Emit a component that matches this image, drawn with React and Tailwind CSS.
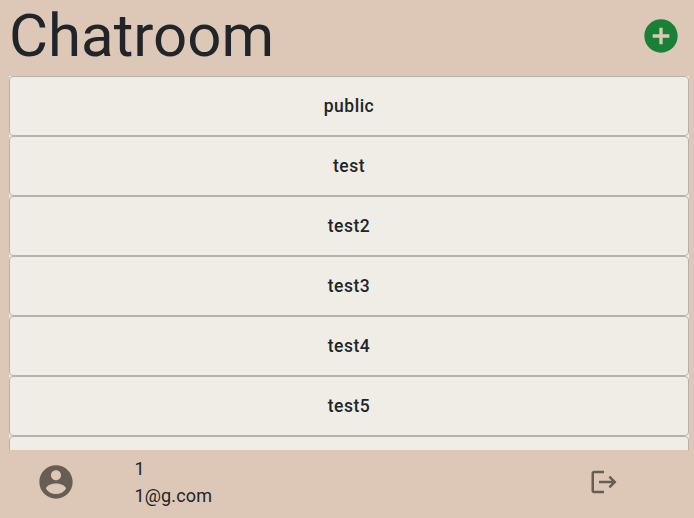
const rooms = ["public", "test", "test2", "test3", "test4", "test5"];

export default function App() {
  return (
    <div className="flex h-[518px] w-full flex-col overflow-hidden bg-[#ddc8b8] font-[Roboto,sans-serif] text-[#212529]">
      <header className="flex h-[76px] shrink-0 items-start justify-between pl-[9px] pr-[13px]">
        <h1 className="text-[60px] leading-[72px]">Chatroom</h1>
        <button aria-label="Add room" className="mt-4 text-[#198038]">
          <svg viewBox="0 0 24 24" className="size-10" fill="currentColor">
            <path d="M12 2C6.48 2 2 6.48 2 12s4.48 10 10 10 10-4.48 10-10S17.52 2 12 2zm5 11h-4v4h-2v-4H7v-2h4V7h2v4h4v2z" />
          </svg>
        </button>
      </header>
      <main className="min-h-0 flex-1 overflow-hidden pl-[9px] pr-[5px]">
        <div className="bg-[#f0ede6]">
          {rooms.map((room) => (
            <button
              key={room}
              className="flex h-[60px] w-full items-center justify-center rounded border border-[#b5b3ae] bg-[#f0ede6] text-[17.5px] font-medium tracking-[0.5px]"
            >
              {room}
            </button>
          ))}
          <div className="h-[60px] rounded border border-[#b5b3ae]" />
        </div>
      </main>
      <footer className="flex h-[68px] shrink-0 items-center pb-1">
        <svg viewBox="0 0 24 24" className="ml-9 size-10 text-[#675d53]" fill="currentColor">
          <path d="M12 2C6.48 2 2 6.48 2 12s4.48 10 10 10 10-4.48 10-10S17.52 2 12 2zm0 3c1.66 0 3 1.34 3 3s-1.34 3-3 3-3-1.34-3-3 1.34-3 3-3zm0 14.2c-2.5 0-4.71-1.28-6-3.22.03-1.99 4-3.08 6-3.08 1.99 0 5.97 1.09 6 3.08-1.29 1.94-3.5 3.22-6 3.22z" />
        </svg>
        <div className="ml-[58.5px] flex-1 text-lg leading-[27px] tracking-[0.15px]">
          <p>1</p>
          <p>1@g.com</p>
        </div>
        <button aria-label="Log out" className="mr-[75px] text-[#675d53]">
          <svg viewBox="0 0 24 24" className="size-[30px]" fill="currentColor">
            <path d="m17 7-1.41 1.41L18.17 11H8v2h10.17l-2.58 2.58L17 17l5-5zM4 5h8V3H4c-1.1 0-2 .9-2 2v14c0 1.1.9 2 2 2h8v-2H4V5z" />
          </svg>
        </button>
      </footer>
    </div>
  );
}
